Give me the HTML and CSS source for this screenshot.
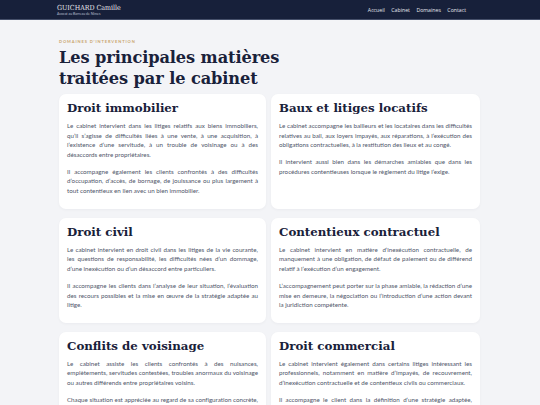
FILE: index.html
```html
<!DOCTYPE html>
<html lang="fr">
<head>
<meta charset="utf-8">
<link rel="stylesheet" href="styles.css">
</head>
<body>
<header class="topbar">
  <div class="topbar-inner">
    <div class="brand">
      <div class="brand-name">GUICHARD Camille</div>
      <div class="brand-sub">Avocat au Barreau de Nîmes</div>
    </div>
    <nav class="nav">
      <a>Accueil</a>
      <a>Cabinet</a>
      <a>Domaines</a>
      <a>Contact</a>
    </nav>
  </div>
</header>
<main class="page">
  <div class="eyebrow">DOMAINES D’INTERVENTION</div>
  <h1 class="title">Les principales matières<br>traitées par le cabinet</h1>
  <div class="grid">
    <section class="card">
      <h2>Droit immobilier</h2>
      <p>Le cabinet intervient dans les litiges relatifs aux biens immobiliers, qu’il s’agisse de difficultés liées à une vente, à une acquisition, à l’existence d’une servitude, à un trouble de voisinage ou à des désaccords entre propriétaires.</p>
      <p>Il accompagne également les clients confrontés à des difficultés d’occupation, d’accès, de bornage, de jouissance ou plus largement à tout contentieux en lien avec un bien immobilier.</p>
    </section>
    <section class="card">
      <h2>Baux et litiges locatifs</h2>
      <p>Le cabinet accompagne les bailleurs et les locataires dans les difficultés relatives au bail, aux loyers impayés, aux réparations, à l’exécution des obligations contractuelles, à la restitution des lieux et au congé.</p>
      <p>Il intervient aussi bien dans les démarches amiables que dans les procédures contentieuses lorsque le règlement du litige l’exige.</p>
    </section>
    <section class="card">
      <h2>Droit civil</h2>
      <p>Le cabinet intervient en droit civil dans les litiges de la vie courante, les questions de responsabilité, les difficultés nées d’un dommage, d’une inexécution ou d’un désaccord entre particuliers.</p>
      <p>Il accompagne les clients dans l’analyse de leur situation, l’évaluation des recours possibles et la mise en œuvre de la stratégie adaptée au litige.</p>
    </section>
    <section class="card">
      <h2>Contentieux contractuel</h2>
      <p>Le cabinet intervient en matière d’inexécution contractuelle, de manquement à une obligation, de défaut de paiement ou de différend relatif à l’exécution d’un engagement.</p>
      <p>L’accompagnement peut porter sur la phase amiable, la rédaction d’une mise en demeure, la négociation ou l’introduction d’une action devant la juridiction compétente.</p>
    </section>
    <section class="card">
      <h2>Conflits de voisinage</h2>
      <p>Le cabinet assiste les clients confrontés à des nuisances, empiètements, servitudes contestées, troubles anormaux du voisinage ou autres différends entre propriétaires voisins.</p>
      <p class="tight">Chaque situation est appréciée au regard de sa configuration concrète, des éléments de preuve disponibles et des solutions envisageables.</p>
    </section>
    <section class="card">
      <h2>Droit commercial</h2>
      <p>Le cabinet intervient également dans certains litiges intéressant les professionnels, notamment en matière d’impayés, de recouvrement, d’inexécution contractuelle et de contentieux civils ou commerciaux.</p>
      <p>Il accompagne le client dans la définition d’une stratégie adaptée, proportionnée aux enjeux du dossier.</p>
    </section>
  </div>
</main>
</body>
</html>
```
FILE: styles.css
```css
* { box-sizing: border-box; }
html, body { margin: 0; padding: 0; }
body {
  background: #f3f4f7;
  font-family: "Lato", "Open Sans", sans-serif;
  color: #1a2238;
}
.topbar {
  background: #17203a;
  height: 20px;
  border-bottom: 1px solid #46506a;
}
.topbar-inner {
  width: 422px;
  margin: 0 auto;
  height: 19px;
  display: flex;
  align-items: center;
  justify-content: space-between;
}
.brand { color: #fff; margin-left: -2px; }
.brand-name {
  font-family: "DejaVu Serif", serif;
  font-stretch: condensed;
  font-size: 7px;
  line-height: 8px;
  color: #e8e9ee;
}
.brand-sub {
  font-size: 3.5px;
  line-height: 4px;
  color: #b9bfcc;
}
.nav { display: flex; gap: 6.5px; margin-right: 15px; }
.nav a {
  color: #e6e8ee;
  font-size: 5.2px;
  font-family: "Open Sans", sans-serif;
}
.page {
  width: 422px;
  margin: 0 auto;
  padding-top: 19px;
}
.eyebrow {
  color: #c9a56b;
  font-size: 4px;
  letter-spacing: 0.9px;
  font-weight: 700;
  line-height: 6px;
}
.title {
  margin: 3px 0 5px;
  font-family: "DejaVu Serif", serif;
  font-weight: 700;
  font-size: 16.2px;
  line-height: 20.5px;
  color: #19213a;
  letter-spacing: -0.1px;
}
.grid {
  display: grid;
  grid-template-columns: 207px 209px;
  column-gap: 5px;
  row-gap: 8.5px;
}
.card {
  background: #fff;
  border-radius: 7px;
  padding: 5px 8px 13.5px;
  box-shadow: 0 1px 3px rgba(20, 30, 60, 0.04);
}
.card h2 {
  margin: 0 0 4px;
  font-family: "DejaVu Serif", serif;
  font-weight: 700;
  font-size: 11.8px;
  line-height: 18px;
  color: #19213a;
}
.card p {
  margin: 0 0 7.5px;
  font-size: 6.22px;
  line-height: 9.6px;
  text-align: justify;
  color: #4f566a;
}
.card p.tight { letter-spacing: -0.03px; word-spacing: -0.1px; }
.card p:last-child { margin-bottom: 0; }
```
